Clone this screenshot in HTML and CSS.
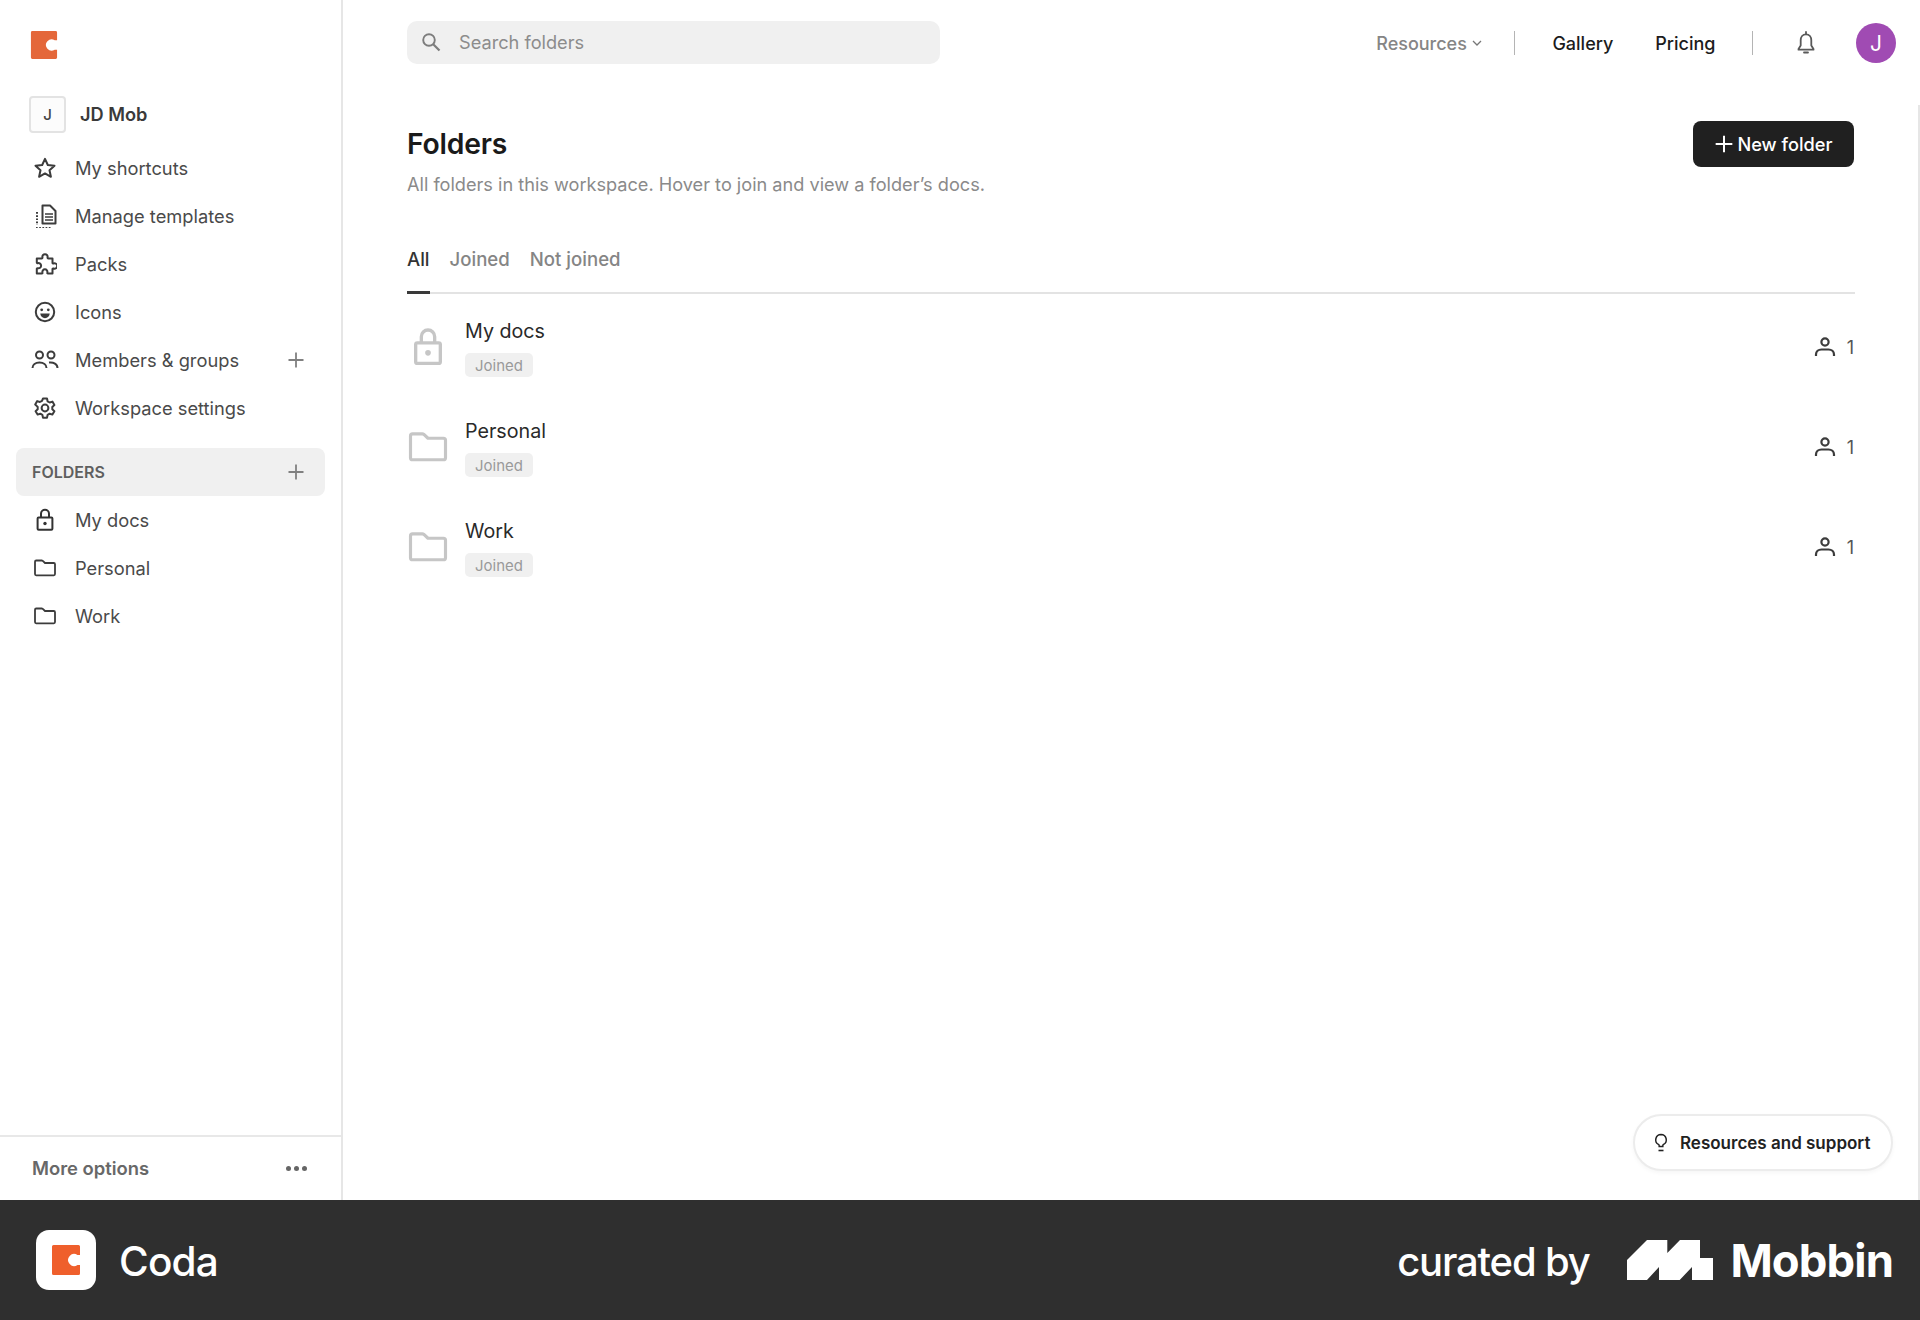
FILE: index.html
```html
<!DOCTYPE html>
<html lang="en">
<head>
<meta charset="utf-8">
<title>Coda Folders</title>
<link rel="stylesheet" href="styles.css">
</head>
<body>
<svg class="defs" aria-hidden="true">
  <symbol id="i-folder" viewBox="0 0 24 24"><path d="M2 5.700c0-.7.5-1.200 1.200-1.200h5.600c.4 0 .7.200 1 .4L12 7h8.800c.7 0 1.200.5 1.200 1.200v9.900c0 .7-.5 1.200-1.200 1.200H3.200c-.7 0-1.200-.5-1.200-1.200z" fill="none" stroke="currentColor" stroke-width="1.800" stroke-linejoin="round"/></symbol>
  <symbol id="i-lock" viewBox="0 0 24 24"><path d="M5.600 9.500h12.800c.6 0 1 .4 1 1v10.300c0 .6-.4 1-1 1H5.600c-.6 0-1-.4-1-1V10.500c0-.6.4-1 1-1zM8 9.500V5.800a4 4 0 0 1 8 0v3.700" fill="none" stroke="currentColor" stroke-width="2"/><circle cx="12" cy="15.500" r="1.700" fill="currentColor"/></symbol>
  <symbol id="i-person" viewBox="0 0 24 24"><circle cx="12" cy="7" r="3.600" fill="none" stroke="currentColor" stroke-width="2.200"/><path d="M3 21v-1.500c0-3 2.400-5 5.500-5h7c3.100 0 5.500 2 5.500 5V21" fill="none" stroke="currentColor" stroke-width="2.200"/></symbol>
  <symbol id="i-plus" viewBox="0 0 18 18"><path d="M9 1.500v15M1.500 9h15" stroke="currentColor" stroke-width="1.800" fill="none"/></symbol>
  <symbol id="i-logo" viewBox="0 0 28 30"><path d="M1.500 0h25A1.500 1.500 0 0 1 28 1.500V10h-2.500a6 6 0 1 0 0 10H28v8.500A1.500 1.500 0 0 1 26.500 30h-25A1.500 1.500 0 0 1 0 28.500v-27A1.500 1.500 0 0 1 1.500 0z" fill="currentColor"/></symbol>
</svg>

<div class="app">
  <aside class="sidebar">
    <div class="sidebar-top">
      <svg class="logo"><use href="#i-logo"/></svg>
      <div class="workspace">
        <span class="workspace-chip">J</span>
        <span class="workspace-name">JD Mob</span>
      </div>
      <nav class="nav">
        <a class="nav-row">
          <svg class="nav-icon" viewBox="0 0 24 24"><path d="M12 2.800l2.800 6.200 6.700.7-5 4.500 1.400 6.600-5.900-3.400-5.900 3.400 1.400-6.600-5-4.500 6.700-.7z" fill="none" stroke="currentColor" stroke-width="2" stroke-linejoin="round"/></svg>
          <span>My shortcuts</span>
        </a>
        <a class="nav-row">
          <svg class="nav-icon" viewBox="0 0 24 24"><path d="M9.500 1.500h7.500L22.500 7v12.500h-13z" fill="none" stroke="currentColor" stroke-width="2" stroke-linejoin="round"/><path d="M12 10h8M12 13h8M12 16h8" fill="none" stroke="currentColor" stroke-width="1.600"/><path d="M4 8v13M3 24h16" fill="none" stroke="currentColor" stroke-width="2" stroke-dasharray="1.700 1.500"/></svg>
          <span>Manage templates</span>
        </a>
        <a class="nav-row">
          <svg class="nav-icon" viewBox="0 0 24 24"><path d="M9.500 5.500a2.600 2.600 0 1 1 5 0c0 .6.300 1 .8 1h4.200v4.400c0 .5.500.8 1 .6a2.700 2.700 0 1 1 0 5c-.5-.2-1 .1-1 .6v4.400h-4.600c-.5 0-.8-.5-.6-1a2.500 2.500 0 1 0-4.800 0c.2.500-.1 1-.6 1H3.800v-4.700c0-.5.500-.8 1-.6a2.600 2.600 0 1 0 0-5c-.5.200-1-.1-1-.6V6.500h4.900c.5 0 .8-.4.800-1z" fill="none" stroke="currentColor" stroke-width="2" stroke-linejoin="round"/></svg>
          <span>Packs</span>
        </a>
        <a class="nav-row">
          <svg class="nav-icon" viewBox="0 0 24 24"><circle cx="12" cy="12" r="9.200" fill="none" stroke="currentColor" stroke-width="2"/><circle cx="8.700" cy="9.800" r="1.400" fill="currentColor"/><circle cx="15.300" cy="9.800" r="1.400" fill="currentColor"/><path d="M7.300 13.500h9.400a4.700 4.700 0 0 1-9.400 0z" fill="currentColor"/></svg>
          <span>Icons</span>
        </a>
        <a class="nav-row">
          <svg class="nav-icon wide" viewBox="0 0 28 24"><circle cx="8.500" cy="7" r="3.500" fill="none" stroke="currentColor" stroke-width="2"/><circle cx="20" cy="7" r="3.500" fill="none" stroke="currentColor" stroke-width="2"/><path d="M1.500 20c0-3.500 3-5.500 7-5.500s7 2 7 5.500M18 14.600c4.500-.6 8.500 1.400 8.500 5.400" fill="none" stroke="currentColor" stroke-width="2"/></svg>
          <span class="grow">Members &amp; groups</span>
          <svg class="plus"><use href="#i-plus"/></svg>
        </a>
        <a class="nav-row">
          <svg class="nav-icon" viewBox="0 0 24 24"><path d="M10 2.500h4l.6 2.800 2.100 1.200 2.700-.9 2 3.400-2.100 1.900v2.400l2.100 1.900-2 3.400-2.700-.9-2.100 1.200-.6 2.800h-4l-.6-2.800-2.100-1.200-2.700.9-2-3.400 2.100-1.900v-2.400L2.200 8.500l2-3.400 2.700.9L9 4.800z" fill="none" stroke="currentColor" stroke-width="2" stroke-linejoin="round"/><circle cx="12" cy="12" r="3.400" fill="none" stroke="currentColor" stroke-width="2"/></svg>
          <span>Workspace settings</span>
        </a>
      </nav>
      <div class="folders-head">
        <span class="grow">FOLDERS</span>
        <svg class="plus"><use href="#i-plus"/></svg>
      </div>
      <nav class="nav">
        <a class="nav-row"><svg class="nav-icon lock"><use href="#i-lock"/></svg><span>My docs</span></a>
        <a class="nav-row"><svg class="nav-icon"><use href="#i-folder"/></svg><span>Personal</span></a>
        <a class="nav-row"><svg class="nav-icon"><use href="#i-folder"/></svg><span>Work</span></a>
      </nav>
    </div>
    <div class="more">
      <span class="grow">More options</span>
      <span class="dots"><i></i><i></i><i></i></span>
    </div>
  </aside>

  <main class="main">
    <header class="topbar">
      <div class="search">
        <svg class="search-icon" viewBox="0 0 20 20"><circle cx="8" cy="8" r="5.800" fill="none" stroke="currentColor" stroke-width="1.900"/><path d="M12 12l6.500 6.500" stroke="currentColor" stroke-width="2.200"/></svg>
        <span>Search folders</span>
      </div>
      <div class="topnav">
        <span class="resources">Resources<svg class="chev" viewBox="0 0 10 6"><path d="M1 1l4 4 4-4" fill="none" stroke="currentColor" stroke-width="1.300"/></svg></span>
        <span class="sep sep-a"></span>
        <span class="toplink gallery">Gallery</span>
        <span class="toplink pricing">Pricing</span>
        <span class="sep sep-b"></span>
        <svg class="bell" viewBox="0 0 20 24"><path d="M10 3.300c-3.400 0-5.300 2.700-5.300 6v5.200L2.500 18v.7h15V18l-2.200-3.500V9.300c0-3.300-1.900-6-5.300-6z" fill="none" stroke="currentColor" stroke-width="1.800" stroke-linejoin="round"/><path d="M10 1v2M8 21.500h4" stroke="currentColor" stroke-width="1.800" fill="none" stroke-linecap="round"/></svg>
        <span class="avatar">J</span>
      </div>
    </header>

    <section class="content">
      <div class="title-row">
        <div>
          <h1>Folders</h1>
          <p class="subtitle">All folders in this workspace. Hover to join and view a folder’s docs.</p>
        </div>
        <button class="new-btn"><svg class="new-plus"><use href="#i-plus"/></svg>New folder</button>
      </div>

      <div class="tabs">
        <span class="tab active">All</span>
        <span class="tab">Joined</span>
        <span class="tab">Not joined</span>
      </div>

      <ul class="list">
        <li class="row">
          <span class="row-icon"><svg class="big-lock"><use href="#i-lock"/></svg></span>
          <div class="row-text"><span class="row-name">My docs</span><span class="badge">Joined</span></div>
          <span class="count"><svg class="person"><use href="#i-person"/></svg>1</span>
        </li>
        <li class="row">
          <span class="row-icon"><svg class="big-folder"><use href="#i-folder"/></svg></span>
          <div class="row-text"><span class="row-name">Personal</span><span class="badge">Joined</span></div>
          <span class="count"><svg class="person"><use href="#i-person"/></svg>1</span>
        </li>
        <li class="row">
          <span class="row-icon"><svg class="big-folder"><use href="#i-folder"/></svg></span>
          <div class="row-text"><span class="row-name">Work</span><span class="badge">Joined</span></div>
          <span class="count"><svg class="person"><use href="#i-person"/></svg>1</span>
        </li>
      </ul>
    </section>

    <div class="help">
      <svg class="bulb" viewBox="0 0 14 20"><path d="M7 1.500a5.300 5.300 0 0 0-2.600 9.900c.5.300.8.800.8 1.400v.7h3.600v-.7c0-.6.300-1.100.8-1.400A5.300 5.300 0 0 0 7 1.500z" fill="none" stroke="currentColor" stroke-width="1.500"/><path d="M4.500 17.500h5" stroke="currentColor" stroke-width="1.600"/></svg>
      Resources and support
    </div>
    <span class="edge"></span>
  </main>
</div>

<footer class="footer">
  <div class="brand">
    <span class="brand-tile"><svg class="brand-logo"><use href="#i-logo"/></svg></span>
    <span class="brand-name">Coda</span>
  </div>
  <div class="curated">
    <span class="curated-by">curated by</span>
    <svg class="mobbin-mark" viewBox="0 0 86 40"><path d="M0 40V20L20 0h20.300v13L53 0h20v18h13v22H65V27L52.700 40H32V27L20 40z" fill="#fff"/></svg>
    <span class="mobbin">Mobbin</span>
  </div>
</footer>
</body>
</html>
```

FILE: styles.css
```css
* { box-sizing: border-box; }
html, body { margin: 0; padding: 0; }
body {
  width: 1920px;
  height: 1320px;
  overflow: hidden;
  background: #fff;
  font-family: Inter, "Liberation Sans", sans-serif;
  color: #2b2b2b;
}
.defs { position: absolute; width: 0; height: 0; }
.grow { flex: 1; }

.app { display: flex; height: 1200px; }

/* Sidebar */
.sidebar {
  width: 343px;
  flex: none;
  display: flex;
  flex-direction: column;
  justify-content: space-between;
  border-right: 2px solid #e6e6e6;
}
.sidebar-top { padding: 31px 16px 0; }
.logo { display: block; width: 28px; height: 28px; margin-left: 14px; color: #e4673a; }
.workspace { display: flex; align-items: center; margin: 37px 0 0 13px; height: 36px; }
.workspace-chip {
  width: 37px; height: 37px;
  border: 2px solid #e3e3e3;
  border-radius: 4px;
  background: #fcfcfc;
  display: flex; align-items: center; justify-content: center;
  font-size: 15px; font-weight: 500; color: #444;
}
.workspace-name { margin-left: 14px; font-size: 18.200px; font-weight: 600; color: #3a3a3a; }
.nav { display: flex; flex-direction: column; }
.workspace + .nav { margin-top: 12px; }
.nav-row {
  height: 48px;
  display: flex;
  align-items: center;
  padding-left: 17px;
  padding-right: 20px;
  font-size: 18.300px;
  color: #4a4a4a;
}
.nav-icon { width: 24px; height: 24px; flex: none; margin-right: 18px; color: #3c3c3c; }
.nav-icon.wide { width: 28px; margin-left: -2px; margin-right: 16px; }
.nav-icon.lock { color: #333; }
.plus { width: 18px; height: 18px; flex: none; color: #808080; }
.folders-head {
  height: 48px;
  margin-top: 16px;
  display: flex;
  align-items: center;
  padding: 0 20px 0 16px;
  background: #f0f0f0;
  border-radius: 8px;
  font-size: 16px;
  font-weight: 600;
  color: #5f5f5f;
}
.folders-head + .nav { margin-top: 0; }
.more {
  height: 65px;
  display: flex;
  align-items: center;
  padding: 0 34px 2px 32px;
  border-top: 2px solid #e8e8e8;
  font-size: 18.400px;
  font-weight: 600;
  color: #686868;
}
.dots { display: flex; gap: 3px; margin-top: 1px; }
.dots i { width: 5px; height: 5px; border-radius: 50%; background: #666; }

/* Main */
.main { flex: 1; position: relative; min-width: 0; }
.edge {
  position: absolute; right: 0; top: 105px; bottom: 0;
  width: 2px; background: #e6e6e6;
}
.topbar {
  height: 86px;
  display: flex;
  align-items: center;
  justify-content: space-between;
  padding: 0 24px 0 64px;
}
.search {
  width: 533px; height: 43px;
  margin-top: -2px;
  background: #f0f0f0;
  border-radius: 10px;
  display: flex; align-items: center;
  padding-left: 14px;
  font-size: 18.200px;
  color: #8c8c8c;
}
.search-icon { width: 20px; height: 20px; margin-right: 18px; color: #7d7d7d; }
.topnav { display: flex; align-items: center; font-size: 18px; font-weight: 500; }
.resources { display: flex; align-items: center; color: #858585; }
.chev { width: 10px; height: 6px; margin-left: 5px; color: #777; }
.sep { width: 1.500px; height: 24px; background: #b4b4b4; }
.sep-a { margin: 0 37px 0 32px; }
.toplink { color: #1c1c1c; }
.pricing { margin-left: 42px; }
.sep-b { margin: 0 43px 0 36px; }
.bell { width: 20px; height: 24px; color: #595959; }
.avatar {
  width: 40px; height: 40px;
  margin-left: 40px;
  border-radius: 50%;
  background: #a04bb3;
  color: #fff;
  font-weight: 400;
  font-size: 21px;
  display: flex; align-items: center; justify-content: center;
}

.content { padding: 0 65px 0 64px; }
.title-row { display: flex; justify-content: space-between; align-items: flex-start; padding-top: 35px; padding-right: 1px; }
h1 { margin: 0; font-size: 28.300px; line-height: 46px; font-weight: 600; color: #1a1a1a; letter-spacing: -.2px; }
.subtitle { margin: 4px 0 0; font-size: 18.150px; line-height: 26px; color: #8a8a8a; }
.new-btn {
  width: 161px; height: 46px;
  border: 0;
  border-radius: 8px;
  background: #202020;
  color: #fff;
  font: 500 18.200px Inter, sans-serif;
  display: flex; align-items: center; justify-content: center;
}
.new-plus { width: 20px; height: 20px; margin-right: 3px; color: #fff; }
.tabs {
  display: flex;
  gap: 20px;
  margin-top: 43px;
  height: 54px;
  border-bottom: 2px solid #e3e3e3;
  font-size: 18.600px;
  font-weight: 500;
  color: #858585;
}
.tab { position: relative; line-height: 26px; padding-top: 6px; }
.tab.active { color: #333; }
.tab.active::after {
  content: "";
  position: absolute; left: 0; right: 0; bottom: -2px;
  height: 3px; background: #3a3a3a;
}
.list { list-style: none; margin: 3px 0 0; padding: 0; }
.row { height: 100px; display: flex; align-items: center; }
.row-icon { width: 42px; margin-right: 16px; display: flex; justify-content: center; color: #c6c6c6; }
.big-lock { width: 40px; height: 40px; }
.big-folder { width: 42px; height: 42px; }
.row-text { flex: 1; display: flex; flex-direction: column; align-items: flex-start; }
.row-name { font-size: 19.700px; line-height: 28px; color: #2a2a2a; }
.badge {
  margin-top: 8px;
  width: 68px; height: 24px;
  border-radius: 5px;
  background: #f0f0f0;
  color: #9a9a9a;
  font-size: 15px;
  display: flex; align-items: center; justify-content: center;
}
.count { display: flex; align-items: center; font-size: 18px; color: #555; margin-right: 1px; }
.person { width: 24px; height: 24px; margin-right: 10px; color: #3c3c3c; }

.help {
  position: absolute; right: 27px; bottom: 29px;
  width: 260px; height: 57px;
  border: 2px solid #ececec;
  border-radius: 29px;
  background: #fff;
  box-shadow: 0 2px 4px rgba(0,0,0,.04);
  display: flex; align-items: center;
  padding-left: 19px;
  font-size: 17px;
  font-weight: 600;
  color: #222;
}
.bulb { width: 14px; height: 20px; margin-right: 12px; color: #222; }

/* Footer */
.footer {
  height: 120px;
  background: #2f2f2f;
  color: #fff;
  display: flex;
  align-items: center;
  justify-content: space-between;
  padding: 0 27px 0 36px;
}
.brand { display: flex; align-items: center; }
.brand-tile {
  width: 60px; height: 60px;
  background: #fff;
  border-radius: 13px;
  display: flex; align-items: center; justify-content: center;
}
.brand-logo { width: 28px; height: 30px; color: #ef5f2c; }
.brand-name { margin-left: 23px; padding-top: 2px; font-size: 40.500px; font-weight: 500; letter-spacing: -.8px; }
.curated { display: flex; align-items: center; }
.curated-by { padding-top: 2px; font-size: 40px; font-weight: 500; letter-spacing: -1.200px; }
.mobbin-mark { width: 86px; height: 40px; margin-left: 38px; }
.mobbin { margin-left: 17px; font-size: 45.400px; font-weight: 700; letter-spacing: -.9px; }
```
